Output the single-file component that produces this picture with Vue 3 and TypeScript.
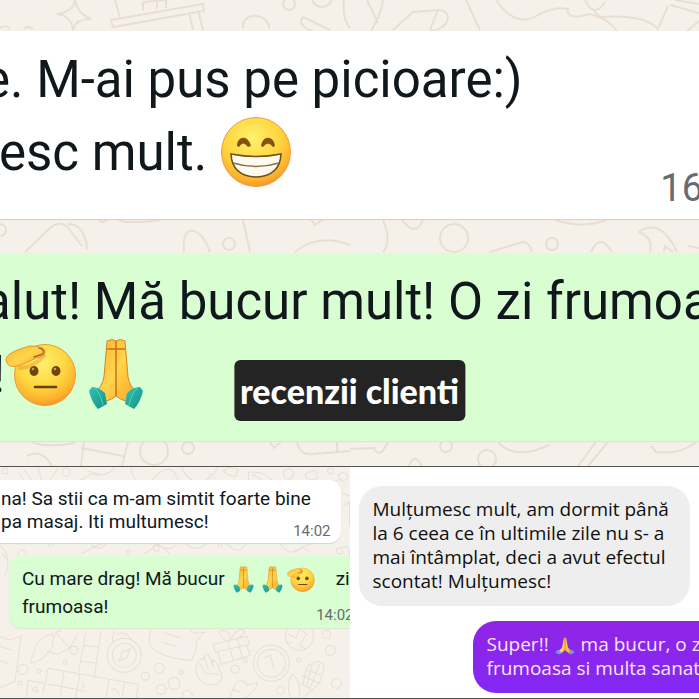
<template>
  <main class="board">
    <svg class="defs" aria-hidden="true">
      <defs>
        <radialGradient id="face" cx="45%" cy="30%" r="72%">
          <stop offset="0" stop-color="#fff06d" />
          <stop offset="0.55" stop-color="#fed63f" />
          <stop offset="0.85" stop-color="#fcb22d" />
          <stop offset="1" stop-color="#f2932b" />
        </radialGradient>
        <linearGradient id="skin" x1="0" x2="1" y1="0" y2="1">
          <stop offset="0" stop-color="#fbb233" />
          <stop offset="0.5" stop-color="#ffd54a" />
          <stop offset="1" stop-color="#f9a32a" />
        </linearGradient>
        <linearGradient id="cuff" x1="0" x2="1" y1="0" y2="1">
          <stop offset="0" stop-color="#2fc4b6" />
          <stop offset="1" stop-color="#159184" />
        </linearGradient>
        <symbol id="grin" viewBox="0 0 72 72">
          <circle cx="36" cy="36" r="34.5" fill="url(#face)" stroke="#f49a3a" stroke-width="1" />
          <path d="M17 30C17 20 28 18 31 30L28 31Q23 24 19 31ZM41 30C43 18 54 20 55 30L53 31Q48 24 43 31Z" fill="#845312" />
          <path d="M11 38Q36 43 61 38Q60 60 36 61Q12 60 11 38Z" fill="#fffaf0" stroke="#70501c" stroke-width="1.6" />
          <path d="M13 47Q36 54 59 47" fill="none" stroke="#85724b" stroke-width="1.5" />
        </symbol>
        <symbol id="salute" viewBox="0 0 72 64">
          <circle cx="40" cy="33" r="30.5" fill="url(#face)" stroke="#ee9b31" stroke-width="1" />
          <ellipse cx="29" cy="29" rx="4.5" ry="5" fill="#70450d" />
          <ellipse cx="51" cy="29" rx="4.5" ry="5" fill="#70450d" />
          <circle cx="28" cy="27" r="1.3" fill="#c99c50" />
          <circle cx="50" cy="27" r="1.3" fill="#c99c50" />
          <path d="M30 45H51" stroke="#65420e" stroke-width="2.6" stroke-linecap="round" />
          <path d="M13 26Q27 27 40 13" fill="none" stroke="#e88725" stroke-width="4" opacity=".4" />
          <path d="M1 17C2 11 14 7 25 4C33 4 40 6 40 9C41 13 37 15 31 16L18 22C9 26 2 26 1 17Z" fill="url(#skin)" stroke="#e79630" stroke-width="1" />
          <path d="M34 6Q40 7 38 12M29 15L38 12" fill="none" stroke="#b96021" stroke-width="1.4" stroke-linecap="round" />
        </symbol>
        <symbol id="pray" viewBox="0 0 54 72">
          <path d="M18 3Q23 0 27 3Q31 0 36 3L39 39Q41 49 47 53L39 64Q30 61 27 58Q24 61 15 64L7 53Q13 49 15 39Z" fill="url(#skin)" stroke="#dd821f" stroke-width="1" />
          <path d="M27 3V58M18 11H36" fill="none" stroke="#c46d16" stroke-width="1.4" />
          <path d="M3 49Q10 49 16 55L18 66L9 71Q3 65 0 53Z" fill="url(#cuff)" />
          <path d="M51 49Q44 49 38 55L36 66L45 71Q51 65 54 53Z" fill="url(#cuff)" />
          <path d="M5 50Q11 53 14 67M49 50Q43 53 40 67" fill="none" stroke="#55d0c1" />
        </symbol>
        <symbol id="pray-blue" viewBox="0 0 54 48">
          <path d="M24 2H30L35 29L45 38L38 45L27 35L16 45L9 38L19 29Z" fill="url(#skin)" />
          <path d="M27 2V35" stroke="#c8701e" stroke-width="2" />
          <path d="M8 34L18 42L10 47L1 41ZM46 34L36 42L44 47L53 41Z" fill="#6d9af0" />
        </symbol>
      </defs>
    </svg>

    <section class="chat featured">
      <svg class="wallpaper" viewBox="0 0 699 466" preserveAspectRatio="xMidYMin slice" aria-hidden="true">
        <g>
          <path d="M57 14Q73 12 75 0Q77 13 91 19Q77 18 73 29Q70 15 57 14ZM111 20L203 4L204 11L113 27ZM115 0L120 17M143 11V2L166 0V8M157 0V9M189 12L193 30M198 10L203 30M0 28Q6 24 10 29M24 29Q28 25 33 29M243 29C241 10 270 13 269 29M303 17C297 24 306 29 313 31M303 17L330 30M344 0Q342 19 350 28" />
          <circle cx="289" cy="4" r="6" /><circle cx="322" cy="-3" r="10" />
          <path d="M367 0L378 23M383 0Q381 15 371 31M393 30L413 12L438 10C454 10 450 30 430 31M438 10L430 30M466 0L480 30M496 0Q516 29 538 15Q555 6 568 9Q566 21 590 14Q609 19 617 31M585 0Q594 19 605 2M594 11L600 17Q645 14 658 29L668 6M670 5L699 13M675 0L699 4M687 31L699 21" />
          <path d="M25 252L50 228Q61 219 69 229L82 246M68 224Q85 224 87 249M96 217Q101 225 107 220M118 219Q123 225 161 220M184 252C181 218 203 229 210 252M243 220L250 252M295 252Q318 233 350 245M311 220L315 225L322 220M383 220Q392 241 383 252M402 220Q415 238 423 220M555 220Q582 229 607 220M490 252L522 242Q529 241 532 252M591 252Q600 232 612 252M638 232Q661 217 677 252M638 232Q654 237 650 252M664 252L665 246L673 252M688 246L699 248" />
          <circle cx="229" cy="244" r="6" /><circle cx="454" cy="238" r="14" /><circle cx="552" cy="244" r="6" /><circle cx="0" cy="230" r="6" />
          <path d="M32 442Q45 448 75 443M84 441L81 466M128 442L122 466M81 448L123 456M27 456Q42 448 52 466M270 442L274 448L281 442M297 442Q300 456 313 454L350 451M337 442V451M350 449L374 448Q380 460 388 442M409 466Q414 452 422 466M498 442Q510 456 533 451L550 445M578 466L596 442M588 466L608 442M651 446L656 452Q680 455 696 442" />
          <circle cx="154" cy="451" r="14" /><circle cx="188" cy="448" r="6" /><circle cx="446" cy="446" r="6" /><circle cx="487" cy="459" r="9" />
        </g>
      </svg>
      <article class="bubble big received">
        <p>e. M-ai pus pe picioare:)<br><span class="second-line">esc mult. </span><svg class="emoji grin" role="img" aria-label="😁"><use href="#grin" /></svg></p>
        <time>16</time>
      </article>
      <article class="bubble big sent">
        <p>alut! Mă bucur mult! O zi frumoa<br><span class="second-line short">!</span><svg class="emoji salute" role="img" aria-label="🫡"><use href="#salute" /></svg><svg class="emoji pray" role="img" aria-label="🙏"><use href="#pray" /></svg></p>
      </article>
      <h1>recenzii clienti</h1>
    </section>

    <div class="pair">
      <section class="chat small">
        <svg class="wallpaper" viewBox="0 0 349 231" preserveAspectRatio="xMinYMin slice" aria-hidden="true">
          <path d="M18 5L28 18M24 3L34 16M38 0L42 15M48 15Q60 0 57 0M78 15L90 7Q110 10 114 0M87 4L102 8M131 0Q131 10 138 15M151 14Q171 -10 178 14M182 0Q187 16 202 14Q214 12 217 0M206 14L210 7L215 12" />
          <path d="M223 4L228 0L238 3L235 10L228 8ZM248 15V5Q267 4 272 15M252 7L264 15M306 11Q303 4 310 5Q317 1 317 10Q315 15 306 11ZM337 8L343 5L348 10L342 15ZM335 14L341 12" />
          <circle cx="5" cy="4" r="3" /><circle cx="66" cy="5" r="4" /><circle cx="288" cy="7" r="5" /><circle cx="330" cy="4" r="3" />
          <path d="M0 78Q13 90 5 108M2 86L8 93M342 26L349 29M342 40L349 35V59M340 81Q350 76 349 90M81 87Q97 77 108 75Q100 85 91 78M144 87L158 77L170 87M151 74Q172 88 177 75M183 74Q195 88 207 75M225 74Q238 92 246 75M279 75Q289 92 302 80L309 85M291 85L315 75" />
          <circle cx="22" cy="87" r="4" /><circle cx="51" cy="76" r="3" /><circle cx="128" cy="85" r="2" /><circle cx="156" cy="81" r="3" /><circle cx="220" cy="78" r="2" /><circle cx="339" cy="84" r="3" />
          <path d="M0 169L10 173L21 169L15 214L0 220M0 179L12 183M0 193L8 196M31 193L37 176Q48 165 54 168L52 180Q42 195 31 196ZM55 165L70 181L57 187L47 184M56 165L61 163M70 181Q74 172 77 168M86 163L78 208M101 163L94 211M83 178L98 180M80 194L96 196" />
          <circle cx="124" cy="188" r="17" /><circle cx="124" cy="188" r="12" /><path d="M119 194L122 185L130 181L127 190ZM112 175L114 163M116 168Q121 163 127 168L135 176" />
          <path d="M151 163Q144 178 158 185Q170 192 191 193Q197 184 196 174L204 165Q193 167 190 163M163 165L181 171M161 175L176 179" />
          <path d="M213 177L247 169L249 177L215 185ZM217 185L221 197L250 188L246 178M228 174L233 194M237 171L242 191M226 174Q213 163 224 163Q230 165 230 173Q238 158 244 164Q246 169 230 173" />
          <circle cx="299" cy="169" r="14" /><path d="M287 166L296 171L299 161L306 167L299 178L306 182M287 176L292 175" />
          <circle cx="271" cy="196" r="18" /><circle cx="271" cy="196" r="14" /><path d="M263 191L270 188L274 202" />
          <path d="M48 201L138 217L136 231M48 201L43 225M28 213L86 224M64 204L60 228M80 207L75 231M109 212L106 231M124 215L122 231M28 213L26 231M32 223Q36 216 38 225ZM111 223Q116 218 119 228M82 214L84 219L81 221" />
          <path d="M213 200L208 187Q204 186 204 190L198 194Q191 208 205 217Q219 220 222 210L217 196L212 192ZM204 190L208 202M199 196L205 206L218 207M229 231L235 216Q242 210 247 218L257 215L255 222L244 231M232 222L240 225" />
          <path d="M291 231Q284 220 292 207Q301 213 299 231M302 218L307 199Q319 190 324 199L319 216L302 231M301 208L319 216M305 202L322 208M300 216L314 224M312 196L306 220M319 197L309 222" />
          <circle cx="23" cy="202" r="5" /><circle cx="74" cy="183" r="4" /><circle cx="330" cy="183" r="5" /><circle cx="159" cy="201" r="5" /><circle cx="181" cy="205" r="2" /><circle cx="235" cy="202" r="4" /><circle cx="174" cy="216" r="6" /><circle cx="161" cy="222" r="5" /><circle cx="187" cy="228" r="5" /><circle cx="298" cy="193" r="2" /><circle cx="280" cy="223" r="4" /><circle cx="336" cy="216" r="5" /><circle cx="145" cy="209" r="4" /><circle cx="65" cy="195" r="2" /><circle cx="39" cy="204" r="2" /><circle cx="20" cy="216" r="2" /><circle cx="245" cy="193" r="2" /><circle cx="326" cy="167" r="4" />
        </svg>
        <article class="bubble note received">
          <p>na! Sa stii ca m-am simtit foarte bine<br>pa masaj. Iti multumesc!</p>
          <time>14:02</time>
        </article>
        <article class="bubble note sent">
          <p>Cu mare drag! Mă bucur<span class="reactions"><svg class="emoji pray" role="img" aria-label="🙏"><use href="#pray" /></svg><svg class="emoji pray" role="img" aria-label="🙏"><use href="#pray" /></svg><svg class="emoji salute" role="img" aria-label="🫡"><use href="#salute" /></svg></span>zi<br>frumoasa!</p>
          <time>14:02</time>
        </article>
      </section>

      <section class="direct">
        <article class="message grey">
          <p>Mulțumesc mult, am dormit până<br>la 6 ceea ce în ultimile zile nu s- a<br>mai întâmplat, deci a avut efectul<br>scontat! Mulțumesc!</p>
        </article>
        <article class="message violet">
          <p>Super!! <svg class="emoji pray" role="img" aria-label="🙏"><use href="#pray-blue" /></svg> ma bucur, o z<br>frumoasa si multa sanat</p>
        </article>
      </section>
    </div>
  </main>
</template>

<script setup lang="ts">
</script>

<style>
body { margin: 0; }
</style>

<style scoped>
.board {
  overflow: hidden;
  background: #fff;
  border-bottom: 1px solid #55534f;
  font-family: Roboto, "Liberation Sans", sans-serif;
  color: #10181c;
}
p, h1 { margin: 0; }
p { white-space: nowrap; }
.defs { position: absolute; width: 0; height: 0; }
.chat {
  position: relative;
  overflow: hidden;
  background: #f5f1ea;
}
.wallpaper {
  position: absolute;
  inset: 0;
  width: 100%;
  height: 100%;
  fill: none;
  stroke: #eaded3;
  stroke-width: 2;
}
.small .wallpaper { stroke: #e6dfd5; stroke-width: 1; }
.bubble { position: relative; }
.featured {
  display: flex;
  flex-direction: column;
  gap: 34px;
  padding: 31px 0 25px;
}
.big {
  display: flex;
  min-height: 188px;
  box-sizing: border-box;
  justify-content: space-between;
  padding-top: 12px;
  font-size: 51px;
  line-height: 73px;
}
.big p { margin-left: -17px; }
.second-line { margin-left: 16px; }
.second-line.short { margin-left: 9px; }
.big time { align-self: flex-end; margin-right: -4px; padding-bottom: 9px; font-size: 38px; line-height: 44px; }
.received { background: #fff; box-shadow: 0 1px 1px #d8d5cf; }
.sent { background: #d8fed2; box-shadow: 0 1px 1px #dce5d4; }
time { color: #686c6e; }
.emoji { display: inline-block; vertical-align: middle; }
.big .grin { width: 72px; height: 72px; vertical-align: -18px; }
.big .salute { width: 72px; height: 64px; vertical-align: -14px; }
.big .pray { width: 54px; height: 72px; margin-left: 12px; vertical-align: -18px; }
h1 {
  position: absolute;
  left: 50%;
  top: 360px;
  transform: translateX(-50%);
  padding: 0 6px;
  border-radius: 6px;
  background: #242424;
  color: #fff;
  font: 900 34px/61px Lato, sans-serif;
  white-space: nowrap;
}
.pair { display: grid; grid-template-columns: 1fr 1fr; border-top: 1px solid #55534f; }
.small {
  box-sizing: border-box;
  min-width: 0;
  display: flex;
  flex-direction: column;
  gap: 13px;
  padding: 13px 0 69px;
}
.note { display: grid; grid-template-columns: minmax(0, 1fr); font-size: 19px; }
.note p, .note time { grid-area: 1 / 1; }
.note time { justify-self: end; align-self: end; font-size: 15px; line-height: 18px; }
.note.received { margin-right: 9px; border-radius: 0 12px 12px 0; padding: 7px 10px 3px 0; line-height: 23px; }
.note.received p { margin-left: 1px; padding-bottom: 7px; }
.note.sent { margin-left: 9px; border-radius: 12px 0 0 12px; padding: 9px 0 4px 13px; line-height: 28px; }
.note.sent p { padding-bottom: 3px; }
.note.sent time { margin-right: -4px; }
.note .pray { width: 21px; height: 27px; margin: 0 4px; }
.note .salute { width: 28px; height: 25px; }
.reactions { margin: 0 21px 0 4px; }
.direct {
  min-width: 0;
  display: flex;
  flex-direction: column;
  gap: 15px;
  padding: 19px 0 5px 9px;
  background: #fff;
}
.message { border-radius: 23px; font: 19px/24px "Open Sans", sans-serif; }
.grey { margin-right: 9px; padding: 11px 14px 13px; background: #eee; color: #101010; }
.violet { margin-left: 114px; border-radius: 23px 0 0 23px; padding: 11px 0 13px 14px; color: #f8e5ff; background: linear-gradient(#9024e6, #8428f4); }
.message .pray { width: 20px; height: 20px; margin: 0 1px; }
</style>
